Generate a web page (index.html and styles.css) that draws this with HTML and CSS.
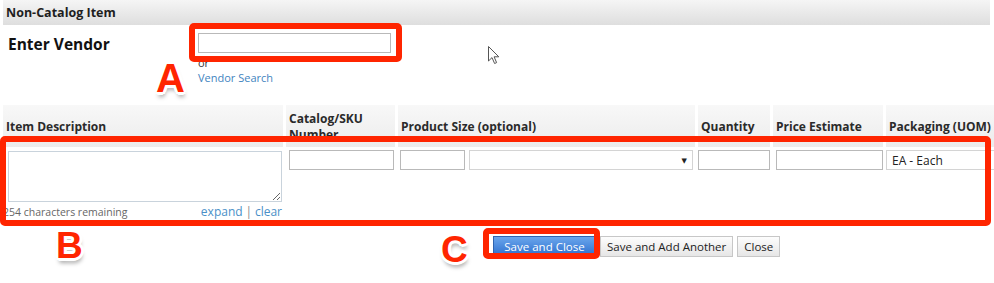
FILE: index.html
```html
<!DOCTYPE html>
<html lang="en">
<head>
    <meta charset="UTF-8">
    <title>Non-Catalog Item</title>
    <link rel="stylesheet" href="styles.css">
</head>
<body>
    <div class="dialog">
        <div class="dialog-title">Non-Catalog Item</div>

        <div class="vendor-row">
            <label class="vendor-label">Enter Vendor</label>
            <div class="vendor-field">
                <input type="text" class="text-input vendor-input">
                <div class="vendor-or">or</div>
                <a class="link vendor-link">Vendor Search</a>
            </div>
        </div>

        <table class="items">
            <colgroup>
                <col class="col-desc">
                <col class="col-sku">
                <col class="col-size">
                <col class="col-qty">
                <col class="col-price">
                <col class="col-uom">
            </colgroup>
            <thead>
                <tr>
                    <th>Item Description</th>
                    <th>Catalog/SKU Number</th>
                    <th>Product Size (optional)</th>
                    <th>Quantity</th>
                    <th>Price Estimate</th>
                    <th>Packaging (UOM)</th>
                </tr>
            </thead>
            <tbody>
                <tr>
                    <td class="desc-cell">
                        <textarea class="desc-input"></textarea>
                        <div class="desc-meta">
                            <span class="chars-left">254 characters remaining</span>
                            <span class="desc-links"><a class="link">expand</a> <span class="sep">|</span> <a class="link">clear</a></span>
                        </div>
                    </td>
                    <td><input type="text" class="text-input sku-input"></td>
                    <td>
                        <div class="size-controls">
                            <input type="text" class="text-input size-input">
                            <div class="select size-select"><span></span><span class="caret">&#9660;</span></div>
                        </div>
                    </td>
                    <td><input type="text" class="text-input qty-input"></td>
                    <td><input type="text" class="text-input price-input"></td>
                    <td><div class="select uom-select"><span>EA - Each</span></div></td>
                </tr>
            </tbody>
        </table>

        <div class="actions">
            <button class="btn btn-primary">Save and Close</button>
            <button class="btn">Save and Add Another</button>
            <button class="btn">Close</button>
        </div>

        <!-- callouts drawn over the form -->
        <div class="callout-box box-a"></div>
        <div class="callout-box box-b"></div>
        <div class="callout-box box-c"></div>
        <div class="callout-letter letter-a">A</div>
        <div class="callout-letter letter-b">B</div>
        <div class="callout-letter letter-c">C</div>

        <svg class="cursor" width="13" height="20" viewBox="0 0 13 20">
            <path d="M1.5 1.5 L1.5 16 L5 12.6 L7.6 18.5 L9.6 17.6 L7.1 11.8 L11.8 11.8 Z" fill="#fff" stroke="#555" stroke-width="1"/>
        </svg>
    </div>
</body>
</html>
```

FILE: styles.css
```css
body {
    margin: 0;
    font-family: "Open Sans", "DejaVu Sans", sans-serif;
    font-size: 11px;
    color: #222;
    background-color: #fff;
    overflow: hidden;
}
.dialog {
    position: relative;
    width: 994px;
    height: 283px;
}
.dialog-title {
    margin-left: 3px;
    width: 987px;
    height: 25px;
    line-height: 25px;
    padding-left: 3px;
    box-sizing: border-box;
    font-size: 12.5px;
    font-weight: bold;
    color: #1e1e1e;
    background: linear-gradient(#f5f5f5, #dedede);
}
.vendor-row {
    display: flex;
    padding-top: 8px;
}
.vendor-label {
    width: 190px;
    padding-left: 8px;
    line-height: 22px;
    font-size: 15.5px;
    font-weight: bold;
    color: #111;
}
.vendor-field {
    display: flex;
    flex-direction: column;
    align-items: flex-start;
}
.text-input {
    box-sizing: border-box;
    height: 20px;
    border: 1px solid #b9b9b9;
    background: #fff;
    margin: 0;
    padding: 0 4px;
}
.vendor-input {
    width: 193px;
}
.vendor-or {
    margin-top: 3px;
    line-height: 14px;
    color: #333;
}
.link {
    color: #3f84c0;
    text-decoration: none;
}
.vendor-link {
    margin-top: 1px;
    line-height: 14px;
}
.items {
    margin-top: 17px;
    border-collapse: separate;
    border-spacing: 3px;
    table-layout: fixed;
    width: 999px;
}
.col-desc { width: 280px; }
.col-sku { width: 109px; }
.col-size { width: 297px; }
.col-qty { width: 72px; }
.col-price { width: 110px; }
.col-uom { width: 110px; }
.items th {
    height: 40px;
    padding: 2px 3px 0;
    text-align: left;
    vertical-align: middle;
    font-size: 12px;
    line-height: 16px;
    font-weight: bold;
    color: #2a2a2a;
    background: linear-gradient(#f8f8f8, #ececec);
}
.items td {
    padding: 0;
    vertical-align: top;
}
.desc-cell {
    padding-left: 5px !important;
}
.desc-input {
    display: block;
    box-sizing: border-box;
    width: 274px;
    height: 51px;
    margin: 1px 0 0 0;
    border: 1px solid #c9d3dc;
    resize: both;
}
.desc-meta {
    display: flex;
    justify-content: space-between;
    width: 279px;
    margin-left: -5px;
    margin-top: 3px;
    line-height: 14px;
}
.chars-left {
    color: #666;
    font-size: 10.5px;
}
.desc-links .link {
    color: #4a90c8;
    font-size: 12px;
}
.sep {
    color: #888;
    font-size: 12px;
}
.items td:nth-child(2) .text-input {
    margin-left: 3px;
}
.sku-input {
    width: 105px;
}
.size-controls {
    display: flex;
    gap: 4px;
    padding-left: 2px;
}
.size-input {
    width: 65px;
}
.select {
    box-sizing: border-box;
    display: flex;
    align-items: center;
    justify-content: space-between;
    height: 20px;
    border: 1px solid #d4d4d4;
    background: #fff;
    padding: 0 5px;
}
.size-select {
    width: 224px;
}
.caret {
    font-size: 7px;
    color: #222;
}
.qty-input {
    width: 72px;
}
.price-input {
    margin-left: 3px;
    width: 107px;
}
.uom-select {
    width: 112px;
    font-size: 12px;
    color: #222;
}
.actions {
    display: flex;
    gap: 4px;
    margin-top: 14px;
    padding-left: 493px;
}
.btn {
    height: 21px;
    padding: 0 6px;
    font-family: inherit;
    font-size: 11.5px;
    color: #222;
    border: 1px solid #c7c7c7;
    background: linear-gradient(#fdfdfd, #e6e6e6);
}
.btn-primary {
    width: 103px;
    color: #fff;
    border-color: #2e64b0;
    background: linear-gradient(#6aa6ec, #2d6fce);
}

.callout-box {
    position: absolute;
    border: 6px solid #ff2500;
    border-radius: 5px;
    box-sizing: border-box;
}
.box-a {
    left: 189px;
    top: 23px;
    width: 213px;
    height: 39px;
}
.box-b {
    left: 0;
    top: 136px;
    width: 991px;
    height: 90px;
}
.box-c {
    left: 483px;
    top: 228px;
    width: 117px;
    height: 31px;
}
.callout-letter {
    position: absolute;
    font-family: "Liberation Sans", Arial, sans-serif;
    font-weight: bold;
    line-height: 1;
    color: #ff2500;
    text-shadow:
        -3px 0 0 #fff, 3px 0 0 #fff, 0 -3px 0 #fff, 0 3px 0 #fff,
        -2px -2px 0 #fff, 2px -2px 0 #fff, -2px 2px 0 #fff, 2px 2px 0 #fff,
        1px 5px 4px rgba(0, 0, 0, 0.35);
}
.letter-a {
    left: 156px;
    top: 58px;
    font-size: 40px;
}
.letter-b {
    left: 56px;
    top: 227px;
    font-size: 37px;
}
.letter-c {
    left: 441px;
    top: 231px;
    font-size: 37px;
}
.cursor {
    position: absolute;
    left: 487px;
    top: 45px;
}
```
